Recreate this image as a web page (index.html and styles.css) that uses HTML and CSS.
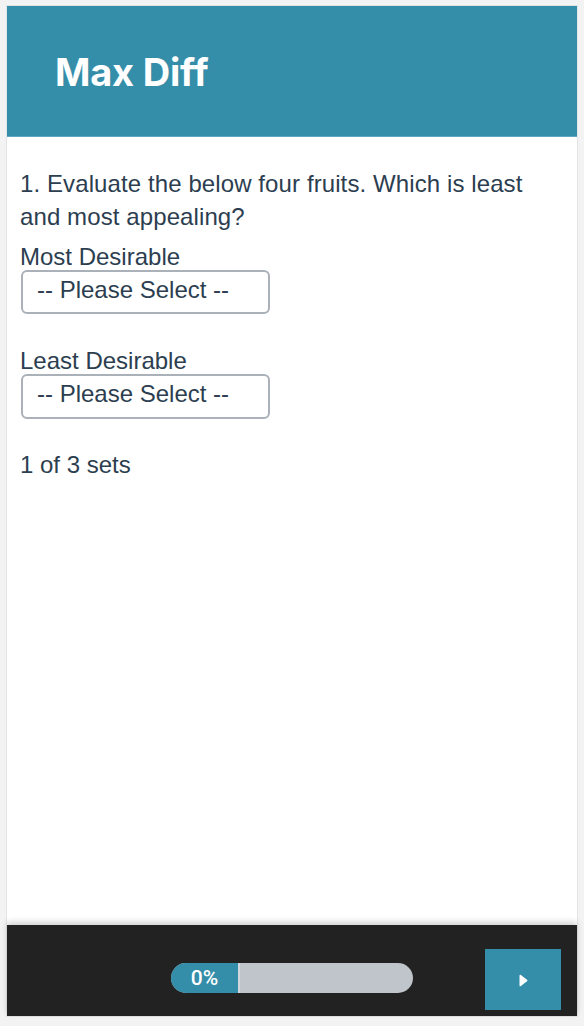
FILE: index.html
```html
<!DOCTYPE html>
<html lang="en">
<head>
<meta charset="utf-8">
<title>Max Diff</title>
<link rel="stylesheet" href="styles.css">
</head>
<body>
<div class="card">
  <header class="header">
    <h1 class="title">Max Diff</h1>
  </header>
  <main class="content">
    <p class="question">1. Evaluate the below four fruits. Which is least and most appealing?</p>
    <div class="field">
      <label class="label">Most Desirable</label>
      <div class="select">-- Please Select --</div>
    </div>
    <div class="field field-second">
      <label class="label">Least Desirable</label>
      <div class="select select-tall">-- Please Select --</div>
    </div>
    <p class="sets">1 of 3 sets</p>
  </main>
  <footer class="footer">
    <div class="spacer"></div>
    <div class="progress">
      <div class="progress-fill">0%</div>
    </div>
    <button class="next" type="button" aria-label="Next">
      <svg width="12" height="13" viewBox="0 0 12 13"><path d="M2.5 1.6 C2.5 0.8 3.3 0.4 3.9 0.9 L10 5.7 C10.5 6.1 10.5 6.9 10 7.3 L3.9 12.1 C3.3 12.6 2.5 12.2 2.5 11.4 Z" fill="#ffffff"/></svg>
    </button>
  </footer>
</div>
</body>
</html>
```

FILE: styles.css
```css
html, body {
  margin: 0;
  padding: 0;
}
body {
  background: #f3f3f3;
  font-family: "Liberation Sans", Arial, Helvetica, sans-serif;
  color: #2c3e50;
}
.card {
  margin: 6px 7px 10px 7px;
  width: 570px;
  height: 1010px;
  background: #ffffff;
  display: flex;
  flex-direction: column;
  box-shadow: 0 0 0 1px #e4e4e4;
}
.header {
  height: 130px;
  background: #358ea9;
  border-bottom: 1px solid #5ea8bf;
  display: flex;
  align-items: center;
  padding-left: 48px;
}
.title {
  margin: 0;
  font-family: Inter, "Open Sans", sans-serif;
  font-weight: 700;
  font-size: 38px;
  color: #ffffff;
  letter-spacing: -0.2px;
  padding-top: 2px;
}
.content {
  flex: 1;
  padding: 30px 13px 0 13px;
}
.question {
  margin: 0 0 10px 0;
  font-size: 24px;
  line-height: 33px;
  letter-spacing: 0.1px;
}
.field {
  display: flex;
  flex-direction: column;
  align-items: flex-start;
}
.field-second {
  margin-top: 33px;
}
.label {
  display: block;
  font-size: 24px;
  line-height: 27px;
  margin-bottom: 0;
}
.select {
  box-sizing: border-box;
  width: 249px;
  height: 44px;
  border: 2px solid #aab1b9;
  border-radius: 6px;
  padding: 0 0 4px 14px;
  font-size: 24px;
  line-height: 36px;
  background: #ffffff;
  margin-left: 1px;
}
.select-tall {
  height: 45px;
}
.sets {
  margin: 32px 0 0 0;
  font-size: 24px;
  line-height: 28px;
}
.footer {
  height: 91px;
  box-sizing: border-box;
  background: #222222;
  box-shadow: 0 -3px 6px rgba(0, 0, 0, 0.18);
  display: grid;
  grid-template-columns: 1fr auto 1fr;
  align-items: center;
  padding: 24px 16px 6px 0;
  position: relative;
}
.progress {
  width: 242px;
  height: 30px;
  border-radius: 15px;
  background: #c0c4cb;
  overflow: hidden;
  display: flex;
  margin-left: 16px;
  margin-top: -3px;
}
.progress-fill {
  width: 67px;
  height: 100%;
  background: #358ea9;
  border-right: 2px solid #d3d6db;
  color: #ffffff;
  font-family: Roboto, "Open Sans", sans-serif;
  font-size: 21px;
  font-weight: 500;
  line-height: 30px;
  text-align: center;
  padding-left: 0;
  box-sizing: content-box;
}
.next {
  justify-self: end;
  width: 76px;
  height: 61px;
  border: 0;
  padding: 0;
  background: #358ea9;
  display: flex;
  align-items: center;
  justify-content: center;
  cursor: pointer;
}
.next svg {
  display: block;
  margin-top: 1px;
}
```
